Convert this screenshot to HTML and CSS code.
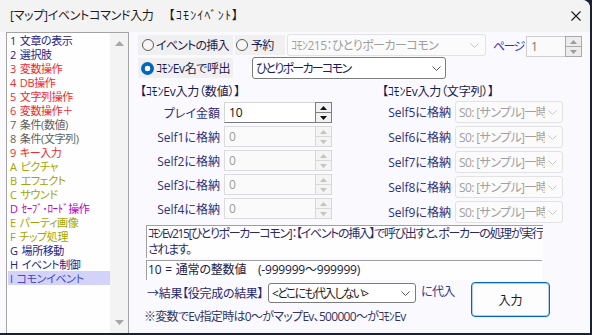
FILE: index.html
```html
<!DOCTYPE html>
<html lang="ja">
<head>
<meta charset="utf-8">
<title>イベントコマンド入力</title>
<link rel="stylesheet" href="styles.css">
</head>
<body>
<div class="window">
  <div class="titlebar">
    <span class="title">[マップ]イベントコマンド入力<span class="title-sub">【ｺﾓﾝｲﾍﾞﾝﾄ】</span></span>
    <svg class="close" width="10" height="10" viewBox="0 0 10 10"><path d="M0.5 0.5 L9.5 9.5 M9.5 0.5 L0.5 9.5" stroke="#1b1b1b" stroke-width="1.1" fill="none"/></svg>
  </div>
  <div class="content">
    <div class="cmdlist">
      <ul class="items">
        <li class="c-navy">1 文章の表示</li>
        <li class="c-navy">2 選択肢</li>
        <li class="c-red">3 変数操作</li>
        <li class="c-red">4 DB操作</li>
        <li class="c-red">5 文字列操作</li>
        <li class="c-red">6 変数操作＋</li>
        <li class="c-gray">7 条件(数値)</li>
        <li class="c-gray">8 条件(文字列)</li>
        <li class="c-red">9 キー入力</li>
        <li class="c-olive">A ピクチャ</li>
        <li class="c-olive">B エフェクト</li>
        <li class="c-olive">C サウンド</li>
        <li class="c-magenta">D ｾｰﾌﾞ･ﾛｰﾄﾞ操作</li>
        <li class="c-olive">E パーティ画像</li>
        <li class="c-olive">F チップ処理</li>
        <li class="c-navy">G 場所移動</li>
        <li class="c-navy">H イベント制御</li>
        <li class="c-sel">I コモンイベント</li>
      </ul>
      <div class="vscroll">
        <svg width="9" height="5" viewBox="0 0 9 5"><path d="M0 5 L4.5 0 L9 5 Z" fill="#a6a6a6"/></svg>
        <svg width="9" height="5" viewBox="0 0 9 5"><path d="M0 0 L9 0 L4.5 5 Z" fill="#a6a6a6"/></svg>
      </div>
    </div>

    <div class="panel">
      <div class="row row1">
        <div class="radio r1"><span class="dot"></span><span class="rlabel">イベントの挿入</span></div>
        <div class="radio r2"><span class="dot"></span><span class="rlabel">予約</span></div>
        <div class="combo disabled top-combo">
          <span class="ctext">ｺﾓﾝ215：ひとりポーカーコモン</span>
          <svg width="9" height="5" viewBox="0 0 9 5"><path d="M0.5 0.5 L4.5 4.5 L8.5 0.5" stroke="#c6c6c6" fill="none"/></svg>
        </div>
        <span class="page-label">ページ</span>
        <div class="spin page-spin">
          <span class="sval">1</span>
          <div class="sbtns">
            <span class="sb"><svg width="7" height="4" viewBox="0 0 7 4"><path d="M0 4 L3.5 0 L7 4 Z" fill="#9c9c9c"/></svg></span>
            <span class="sb"><svg width="7" height="4" viewBox="0 0 7 4"><path d="M0 0 L7 0 L3.5 4 Z" fill="#9c9c9c"/></svg></span>
          </div>
        </div>
      </div>

      <div class="row row2">
        <div class="radio r3 checked"><span class="dot"></span><span class="rlabel">ｺﾓﾝEv名で呼出</span></div>
        <div class="combo active name-combo">
          <span class="ctext">ひとりポーカーコモン</span>
          <svg width="9" height="5" viewBox="0 0 9 5"><path d="M0.5 0.5 L4.5 4.5 L8.5 0.5" stroke="#5a5a5a" fill="none"/></svg>
        </div>
      </div>

      <div class="fields">
        <div class="fcol fcol-left">
          <div class="fhead">【ｺﾓﾝEv入力（数値）】</div>
          <div class="frow">
            <span class="flabel">プレイ金額</span>
            <div class="spin num active">
              <span class="sval">10</span>
              <div class="sbtns">
                <span class="sb"><svg width="7" height="4" viewBox="0 0 7 4"><path d="M0 4 L3.5 0 L7 4 Z" fill="#111"/></svg></span>
                <span class="sb"><svg width="7" height="4" viewBox="0 0 7 4"><path d="M0 0 L7 0 L3.5 4 Z" fill="#111"/></svg></span>
              </div>
            </div>
          </div>
          <div class="frow">
            <span class="flabel">Self1に格納</span>
            <div class="spin num">
              <span class="sval">0</span>
              <div class="sbtns">
                <span class="sb"><svg width="7" height="4" viewBox="0 0 7 4"><path d="M0 4 L3.5 0 L7 4 Z" fill="#c4c4c4"/></svg></span>
                <span class="sb"><svg width="7" height="4" viewBox="0 0 7 4"><path d="M0 0 L7 0 L3.5 4 Z" fill="#c4c4c4"/></svg></span>
              </div>
            </div>
          </div>
          <div class="frow">
            <span class="flabel">Self2に格納</span>
            <div class="spin num">
              <span class="sval">0</span>
              <div class="sbtns">
                <span class="sb"><svg width="7" height="4" viewBox="0 0 7 4"><path d="M0 4 L3.5 0 L7 4 Z" fill="#c4c4c4"/></svg></span>
                <span class="sb"><svg width="7" height="4" viewBox="0 0 7 4"><path d="M0 0 L7 0 L3.5 4 Z" fill="#c4c4c4"/></svg></span>
              </div>
            </div>
          </div>
          <div class="frow">
            <span class="flabel">Self3に格納</span>
            <div class="spin num">
              <span class="sval">0</span>
              <div class="sbtns">
                <span class="sb"><svg width="7" height="4" viewBox="0 0 7 4"><path d="M0 4 L3.5 0 L7 4 Z" fill="#c4c4c4"/></svg></span>
                <span class="sb"><svg width="7" height="4" viewBox="0 0 7 4"><path d="M0 0 L7 0 L3.5 4 Z" fill="#c4c4c4"/></svg></span>
              </div>
            </div>
          </div>
          <div class="frow">
            <span class="flabel">Self4に格納</span>
            <div class="spin num">
              <span class="sval">0</span>
              <div class="sbtns">
                <span class="sb"><svg width="7" height="4" viewBox="0 0 7 4"><path d="M0 4 L3.5 0 L7 4 Z" fill="#c4c4c4"/></svg></span>
                <span class="sb"><svg width="7" height="4" viewBox="0 0 7 4"><path d="M0 0 L7 0 L3.5 4 Z" fill="#c4c4c4"/></svg></span>
              </div>
            </div>
          </div>
        </div>

        <div class="fcol fcol-right">
          <div class="fhead">【ｺﾓﾝEv入力（文字列）】</div>
          <div class="frow">
            <span class="flabel">Self5に格納</span>
            <div class="combo disabled str-combo"><span class="ctext">S0: [サンプル]一時文字列</span><svg width="9" height="5" viewBox="0 0 9 5"><path d="M0.5 0.5 L4.5 4.5 L8.5 0.5" stroke="#c6c6c6" fill="none"/></svg></div>
          </div>
          <div class="frow">
            <span class="flabel">Self6に格納</span>
            <div class="combo disabled str-combo"><span class="ctext">S0: [サンプル]一時文字列</span><svg width="9" height="5" viewBox="0 0 9 5"><path d="M0.5 0.5 L4.5 4.5 L8.5 0.5" stroke="#c6c6c6" fill="none"/></svg></div>
          </div>
          <div class="frow">
            <span class="flabel">Self7に格納</span>
            <div class="combo disabled str-combo"><span class="ctext">S0: [サンプル]一時文字列</span><svg width="9" height="5" viewBox="0 0 9 5"><path d="M0.5 0.5 L4.5 4.5 L8.5 0.5" stroke="#c6c6c6" fill="none"/></svg></div>
          </div>
          <div class="frow">
            <span class="flabel">Self8に格納</span>
            <div class="combo disabled str-combo"><span class="ctext">S0: [サンプル]一時文字列</span><svg width="9" height="5" viewBox="0 0 9 5"><path d="M0.5 0.5 L4.5 4.5 L8.5 0.5" stroke="#c6c6c6" fill="none"/></svg></div>
          </div>
          <div class="frow">
            <span class="flabel">Self9に格納</span>
            <div class="combo disabled str-combo"><span class="ctext">S0: [サンプル]一時文字列</span><svg width="9" height="5" viewBox="0 0 9 5"><path d="M0.5 0.5 L4.5 4.5 L8.5 0.5" stroke="#c6c6c6" fill="none"/></svg></div>
          </div>
        </div>
      </div>

      <div class="desc">ｺﾓﾝEv215[ひとりポーカーコモン]：【イベントの挿入】で呼び出すと、ポーカーの処理が実行<br>されます。</div>
      <div class="valuebox">10 = 通常の整数値　(-999999～999999)</div>

      <div class="bottom">
        <div class="bottom-left">
          <div class="result-row">
            <span class="rtext">→結果【役完成の結果】</span>
            <div class="combo active result-combo">
              <span class="ctext">&lt;どこにも代入しない&gt;</span>
              <svg width="9" height="5" viewBox="0 0 9 5"><path d="M0.5 0.5 L4.5 4.5 L8.5 0.5" stroke="#5a5a5a" fill="none"/></svg>
            </div>
            <span class="assign">に代入</span>
          </div>
          <div class="note">※変数でEv指定時は0～がマップEv、500000～がｺﾓﾝEv</div>
        </div>
        <button class="ok">入力</button>
      </div>
    </div>
  </div>
</div>
</body>
</html>
```

FILE: styles.css
```css
* { box-sizing: border-box; }

html, body {
  margin: 0;
  padding: 0;
}

body {
  width: 592px;
  height: 335px;
  overflow: hidden;
  background: #1c2130;
  font-family: "Open Sans", "Noto Sans CJK JP", sans-serif;
  font-size: 12px;
  font-feature-settings: "palt";
  color: #1c1c4c;
}

.window {
  width: 590px;
  height: 333px;
  background: #f9f9fe;
  border-top-right-radius: 8px;
  overflow: hidden;
  display: flex;
  flex-direction: column;
}

/* ---------- title bar ---------- */
.titlebar {
  height: 32px;
  flex: none;
  background: #f3f3f3;
  display: flex;
  align-items: center;
  padding: 0 9px 0 10px;
}

.title {
  flex: 1;
  font-size: 12px;
  line-height: 16px;
  color: #1b1b1b;
  white-space: nowrap;
  letter-spacing: -0.3px;
}

.title-sub {
  margin-left: 15px;
  letter-spacing: 1.2px;
}

.close { flex: none; }

/* ---------- content ---------- */
.content {
  flex: 1;
  min-height: 0;
  display: flex;
  padding-left: 6px;
}

.cmdlist {
  flex: none;
  width: 123px;
  height: 301px;
  border: 1px solid #a3a3a3;
  border-bottom: none;
  background: #fefeff;
  display: flex;
}

.items {
  list-style: none;
  margin: 0;
  padding: 0 0 0 1px;
  width: 103px;
}

.items li {
  height: 14px;
  line-height: 15px;
  padding-left: 2px;
  font-size: 11px;
  white-space: nowrap;
  word-spacing: 1.5px;
  letter-spacing: -0.4px;
}

.c-navy { color: #22228a; }
.c-red { color: #f02a2a; }
.c-gray { color: #5e5e5e; }
.c-olive { color: #a4a400; }
.c-magenta { color: #c000c0; }
.c-sel { color: #4444cc; background: #d3d3f9; }

.vscroll {
  width: 18px;
  background: #f3f3f3;
  display: flex;
  flex-direction: column;
  align-items: center;
  justify-content: space-between;
  padding: 8px 0 8px;
}

/* ---------- right panel ---------- */
.panel {
  flex: 1;
  display: flex;
  flex-direction: column;
  padding-left: 9px;
}

.row {
  display: flex;
  align-items: flex-start;
}

.row1 { margin-top: 2px; height: 23px; }
.row2 { height: 22px; }

.radio {
  flex: none;
  display: flex;
  align-items: center;
  height: 20px;
  margin-top: 1px;
  background: #f0f0f0;
  color: #1c1c4c;
  white-space: nowrap;
}

.rlabel { letter-spacing: -0.8px; }

.dot {
  flex: none;
  width: 12px;
  height: 12px;
  border-radius: 50%;
  border: 1px solid #5c5c5c;
  background: #f6f6f6;
  margin-right: 2px;
}

.r1 { width: 95px; padding-left: 4px; }
.r2 { width: 50px; margin-left: 2px; padding-left: 1px; }
.r2 .dot { margin-right: 3px; }
.r3 { width: 95px; padding-left: 3px; }
.r3 .rlabel { letter-spacing: -0.4px; }

.checked .dot {
  width: 13px;
  height: 13px;
  border: none;
  background: radial-gradient(circle, #ffffff 0 2.6px, #0067c0 3.1px);
}

.combo {
  flex: none;
  display: flex;
  align-items: center;
  height: 22px;
  border: 1px solid #e2e2e2;
  border-radius: 3px;
  background: #fbfbfb;
  padding: 0 6px 0 3px;
  color: #a0a0a0;
}

.combo .ctext {
  flex: 1;
  overflow: hidden;
  white-space: nowrap;
}

.combo svg { flex: none; margin-left: 3px; }

.combo.active {
  background: #ffffff;
  border-color: #7c7c7c;
  color: #1c1c60;
}

.top-combo { width: 199px; margin-left: 2px; }
.top-combo .ctext { letter-spacing: -0.5px; }
.name-combo { width: 194px; margin-left: 19px; padding-right: 4px; }
.name-combo .ctext { letter-spacing: -1.7px; }

.page-label {
  flex: none;
  width: 33px;
  margin-left: 7px;
  margin-top: 2px;
  line-height: 22px;
  color: #2a2ad0;
  white-space: nowrap;
  letter-spacing: -1.7px;
}

.spin {
  flex: none;
  display: flex;
  height: 21px;
}

.spin .sval {
  flex: 1;
  border: 1px solid #dcdcdc;
  border-right: none;
  background: #fafafa;
  padding-left: 4px;
  line-height: 19px;
  color: #9a9a9a;
}

.spin .sbtns {
  width: 17px;
  display: flex;
  flex-direction: column;
}

.spin .sb {
  flex: 1;
  display: flex;
  align-items: center;
  justify-content: center;
  border: 1px solid #d8d8d8;
  background: #f4f4f4;
}

.spin .sb + .sb { border-top: none; }

.page-spin { width: 56px; margin-top: 2px; }
.page-spin .sval { color: #777; border-color: #cfcfcf; }
.page-spin .sb { border-color: #a9a9a9; background: #ececec; }

.spin.active .sval {
  background: #ffffff;
  border-color: #d6d6d6;
  border-bottom-color: #7a7a7a;
  color: #111;
}

.spin.active .sb {
  border-color: #7e7e7e;
  background: #f2f2f2;
}

/* ---------- fields ---------- */
.fields {
  display: flex;
  margin-top: 7px;
  padding-left: 2px;
}

.fcol {
  flex: none;
  display: flex;
  flex-direction: column;
  gap: 3px;
}

.fcol-left { width: 192px; }
.fcol-right { margin-left: 50px; }

.fhead {
  height: 12px;
  line-height: 12px;
  color: #1a1a4a;
  white-space: nowrap;
  letter-spacing: -0.2px;
}

.fcol-left .fhead { margin-bottom: 1px; }

.frow {
  display: flex;
  align-items: center;
}

.flabel {
  flex: none;
  text-align: right;
  padding-right: 4px;
  color: #303078;
  white-space: nowrap;
}

.fcol-left .flabel { width: 84px; }
.fcol-right .flabel { width: 73px; }

.num { width: 108px; }

.str-combo { width: 108px; padding-right: 5px; }
.str-combo .ctext { letter-spacing: -0.6px; }

/* ---------- description ---------- */
.desc {
  margin-top: 2px;
  margin-left: 8px;
  width: 397px;
  height: 33px;
  border-top: 1px solid #a0a0a0;
  border-left: 1px solid #a0a0a0;
  background: #fefeff;
  padding-left: 1px;
  line-height: 15.5px;
  color: #2a2a66;
  white-space: nowrap;
  overflow: hidden;
  letter-spacing: -1.35px;
}

.valuebox {
  margin-top: 2px;
  margin-left: 8px;
  width: 396px;
  height: 20px;
  border-top: 1px solid #a0a0a0;
  border-left: 1px solid #a0a0a0;
  background: #fefeff;
  padding-left: 1px;
  line-height: 18px;
  color: #202040;
  white-space: nowrap;
  word-spacing: 1px;
  letter-spacing: -0.2px;
}

/* ---------- bottom ---------- */
.bottom {
  display: flex;
  margin-top: 2px;
}

.bottom-left {
  flex: none;
  width: 316px;
  margin-left: 6px;
}

.result-row {
  display: flex;
  align-items: center;
  height: 22px;
  padding-left: 3px;
}

.rtext {
  flex: none;
  width: 121px;
  color: #28286e;
  white-space: nowrap;
  letter-spacing: -0.3px;
}

.result-combo {
  width: 148px;
  height: 20px;
  border-color: #a8a8a8;
  padding-right: 5px;
}

.result-combo .ctext {
  color: #1a1a1a;
  letter-spacing: -1.8px;
}

.assign {
  flex: none;
  margin-left: 5px;
  color: #363680;
  align-self: flex-start;
  margin-top: 2px;
  line-height: 16px;
  white-space: nowrap;
  letter-spacing: -0.6px;
}

.note {
  margin-top: 6px;
  line-height: 14px;
  font-size: 12px;
  color: #34345e;
  white-space: nowrap;
  letter-spacing: -0.7px;
}

.ok {
  flex: none;
  margin-left: 11px;
  width: 79px;
  height: 35px;
  border: 1px solid #0067c0;
  border-radius: 4px;
  background: #fdfdfd;
  box-shadow: inset 0 0 0 1px rgba(0, 103, 192, 0.3);
  font-family: inherit;
  font-size: 12px;
  color: #1a1a1a;
  padding: 0;
}
```
